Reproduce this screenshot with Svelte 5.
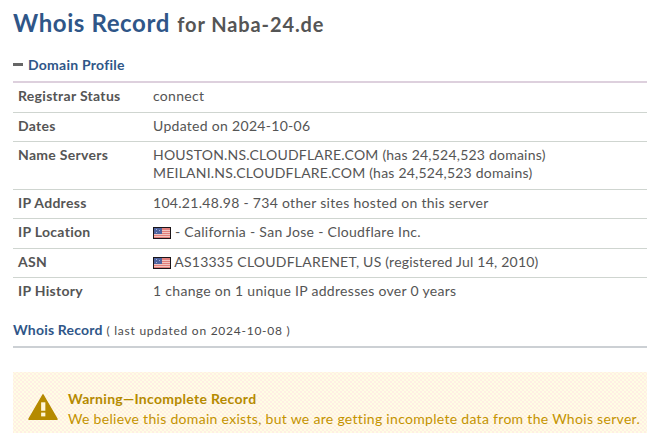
<script>
  const rows = [
    { label: 'Registrar Status', lines: ['connect'] },
    { label: 'Dates', lines: ['Updated on 2024-10-06'] },
    { label: 'Name Servers', caps: true, lines: ['HOUSTON.NS.CLOUDFLARE.COM (has 24,524,523 domains)', 'MEILANI.NS.CLOUDFLARE.COM (has 24,524,523 domains)'] },
    { label: 'IP Address', lines: ['104.21.48.98 - 734 other sites hosted on this server'] },
    { label: 'IP Location', flag: true, lines: [' - California - San Jose - Cloudflare Inc.'] },
    { label: 'ASN', flag: true, caps: true, lines: [' AS13335 CLOUDFLARENET, US (registered Jul 14, 2010)'] },
    { label: 'IP History', lines: ['1 change on 1 unique IP addresses over 0 years'] }
  ];
</script>

<main class="page">
  <h1>Whois Record <small>for Naba-24.de</small></h1>

  <h2 class="profile"><span class="minus"></span>Domain Profile</h2>
  <div class="rule"></div>

  <div class="table">
    {#each rows as row}
      <div class="row">
        <div class="label">{row.label}</div>
        <div class="value" class:caps={row.caps}>
          {#each row.lines as line}
            <div class="line">
              {#if row.flag}
                <svg class="flag" viewBox="0 0 18 12" width="18" height="12" aria-hidden="true">
                  <rect width="18" height="12" fill="#1a1418" />
                  <rect x="1" y="1" width="16" height="10" fill="#e27f7c" />
                  <rect x="1" y="3" width="16" height="1" fill="#f3c6c0" />
                  <rect x="1" y="5" width="16" height="1" fill="#f3c6c0" />
                  <rect x="1" y="7" width="16" height="1" fill="#f3c6c0" />
                  <rect x="1" y="9" width="16" height="1" fill="#f3c6c0" />
                  <rect x="1" y="1" width="8" height="6" fill="#4f639f" />
                  <rect x="3" y="2" width="1" height="1" fill="#aab4d8" />
                  <rect x="6" y="3" width="1" height="1" fill="#aab4d8" />
                  <rect x="3" y="5" width="1" height="1" fill="#aab4d8" />
                </svg>
              {/if}{line}
            </div>
          {/each}
        </div>
      </div>
    {/each}
  </div>

  <div class="record">
    <span class="record-title">Whois Record</span>
    <span class="record-note">( last updated on 2024-10-08 )</span>
  </div>
  <div class="rule grey"></div>

  <section class="warning">
    <svg class="warn-icon" viewBox="0 0 32 28" width="30" height="28" aria-hidden="true">
      <path d="M16 1 L31 27 H1 Z" fill="#b58a00" stroke="#b58a00" stroke-width="1.5" stroke-linejoin="round" />
      <rect x="14" y="9" width="4.5" height="9" fill="#fff6d8" />
      <rect x="14" y="20" width="4.5" height="4" fill="#fff6d8" />
    </svg>
    <div class="warn-text">
      <div class="warn-title">Warning—Incomplete Record</div>
      <div class="warn-body">We believe this domain exists, but we are getting incomplete data from the Whois server.</div>
    </div>
  </section>
</main>

<style>
  :global(body) {
    margin: 0;
    background: #fff;
    overflow: hidden;
  }
  .page {
    box-sizing: border-box;
    width: 648px;
    height: 433px;
    overflow: hidden;
    padding: 7px 1px 0 13px;
    font-family: Lato, "Liberation Sans", sans-serif;
    font-size: 14px;
    color: #555;
    letter-spacing: 0.3px;
  }
  h1 {
    margin: 0;
    font-size: 24px;
    line-height: 32px;
    font-weight: 700;
    color: #2f5688;
    letter-spacing: 0.6px;
  }
  h1 small {
    font-size: 20px;
    color: #555;
    letter-spacing: 0.9px;
    margin-left: 1px;
  }
  .profile {
    display: flex;
    align-items: center;
    margin: 15px 0 0;
    height: 18px;
    font-size: 14px;
    font-weight: 700;
    color: #2f5688;
    letter-spacing: 0.25px;
  }
  .minus {
    display: inline-block;
    width: 10px;
    height: 3px;
    margin-right: 5px;
    background: #666;
  }
  .rule {
    height: 2px;
    margin-top: 8px;
    background: #ddd0dd;
  }
  .rule.grey {
    margin-top: 6px;
    background: #ccd0d4;
  }
  .row {
    display: flex;
    padding: 4px 5px 6.5px;
    border-bottom: 1px solid #cfd5d0;
    line-height: 18px;
  }
  .row:last-child {
    border-bottom: 0;
  }
  .label {
    width: 135px;
    flex: none;
    font-weight: 700;
    color: #555;
  }
  .value.caps {
    letter-spacing: 0.22px;
  }
  .flag {
    vertical-align: -2px;
  }
  .record {
    margin-top: 14px;
    line-height: 18px;
    letter-spacing: 0.2px;
  }
  .record-title {
    font-weight: 700;
    color: #2f5688;
  }
  .record-note {
    font-size: 12px;
    font-weight: 400;
    color: #4c4c4c;
    letter-spacing: 0.75px;
  }
  .warning {
    display: flex;
    align-items: center;
    gap: 10px;
    margin-top: 24px;
    padding: 17px 0 17px 15px;
    background-color: #fffde4;
    background-image:
      radial-gradient(circle, #ffeee4 0.7px, transparent 0.9px),
      radial-gradient(circle, #ffeee4 0.7px, transparent 0.9px);
    background-size: 4px 4px;
    background-position: 0 0, 2px 2px;
    color: #c49300;
  }
  .warn-icon {
    margin-bottom: 4px;
  }
  .warn-title {
    font-weight: 700;
    color: #b58a00;
    line-height: 20px;
  }
  .warn-body {
    white-space: nowrap;
    line-height: 20px;
  }
</style>
